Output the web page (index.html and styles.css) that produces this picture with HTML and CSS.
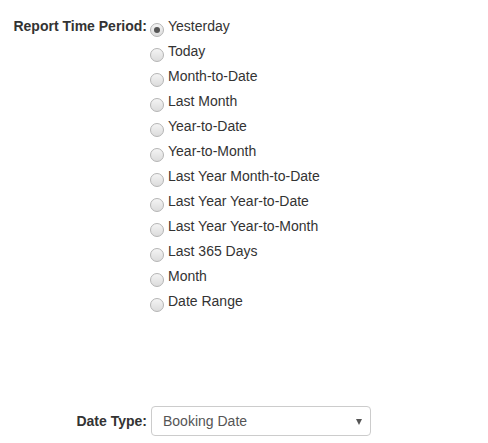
FILE: index.html
```html
<!DOCTYPE html>
<html>
<head>
<meta charset="utf-8">
<link rel="stylesheet" href="styles.css">
</head>
<body>
<div class="form">
  <div class="row period">
    <div class="label">Report Time Period:</div>
    <div class="options">
      <label class="opt"><span class="radio checked"></span>Yesterday</label>
      <label class="opt"><span class="radio"></span>Today</label>
      <label class="opt"><span class="radio"></span>Month-to-Date</label>
      <label class="opt"><span class="radio"></span>Last Month</label>
      <label class="opt"><span class="radio"></span>Year-to-Date</label>
      <label class="opt"><span class="radio"></span>Year-to-Month</label>
      <label class="opt"><span class="radio"></span>Last Year Month-to-Date</label>
      <label class="opt"><span class="radio"></span>Last Year Year-to-Date</label>
      <label class="opt"><span class="radio"></span>Last Year Year-to-Month</label>
      <label class="opt"><span class="radio"></span>Last 365 Days</label>
      <label class="opt"><span class="radio"></span>Month</label>
      <label class="opt"><span class="radio"></span>Date Range</label>
    </div>
  </div>
  <div class="row datetype">
    <div class="label">Date Type:</div>
    <div class="select">
      <span class="value">Booking Date</span>
      <span class="arrow"></span>
    </div>
  </div>
</div>
</body>
</html>
```

FILE: styles.css
```css
html, body {
  margin: 0;
  padding: 0;
  background: #fff;
}
body {
  font-family: "Liberation Sans", Arial, sans-serif;
  font-size: 14px;
  color: #333;
}
.form {
  padding: 14px 0 0 0;
}
.row {
  display: flex;
  align-items: flex-start;
}
.label {
  width: 147px;
  text-align: right;
  font-weight: bold;
  color: #333;
  box-sizing: border-box;
  line-height: 25px;
  flex-shrink: 0;
}
.options {
  display: flex;
  flex-direction: column;
}
.opt {
  display: flex;
  align-items: center;
  height: 25px;
  line-height: 25px;
  color: #333;
}
.radio {
  width: 12px;
  height: 12px;
  border-radius: 50%;
  border: 1px solid #b4b4b4;
  background: linear-gradient(#f4f4f4, #dcdcdc);
  margin: 6px 4px 0 3px;
  position: relative;
  flex-shrink: 0;
}
.radio.checked::after {
  content: "";
  position: absolute;
  left: 3px;
  top: 3px;
  width: 6px;
  height: 6px;
  border-radius: 50%;
  background: #555;
}
.datetype {
  margin-top: 92px;
  align-items: center;
}
.datetype .label {
  line-height: 30px;
}
.select {
  margin-left: 4px;
  width: 220px;
  height: 30px;
  box-sizing: border-box;
  border: 1px solid #ccc;
  border-radius: 4px;
  display: flex;
  align-items: center;
  justify-content: space-between;
  padding: 0 8px 0 11px;
  color: #555;
}
.arrow {
  width: 0;
  height: 0;
  border-left: 3px solid transparent;
  border-right: 3px solid transparent;
  border-top: 6px solid #555;
  margin-top: 1px;
}
```
